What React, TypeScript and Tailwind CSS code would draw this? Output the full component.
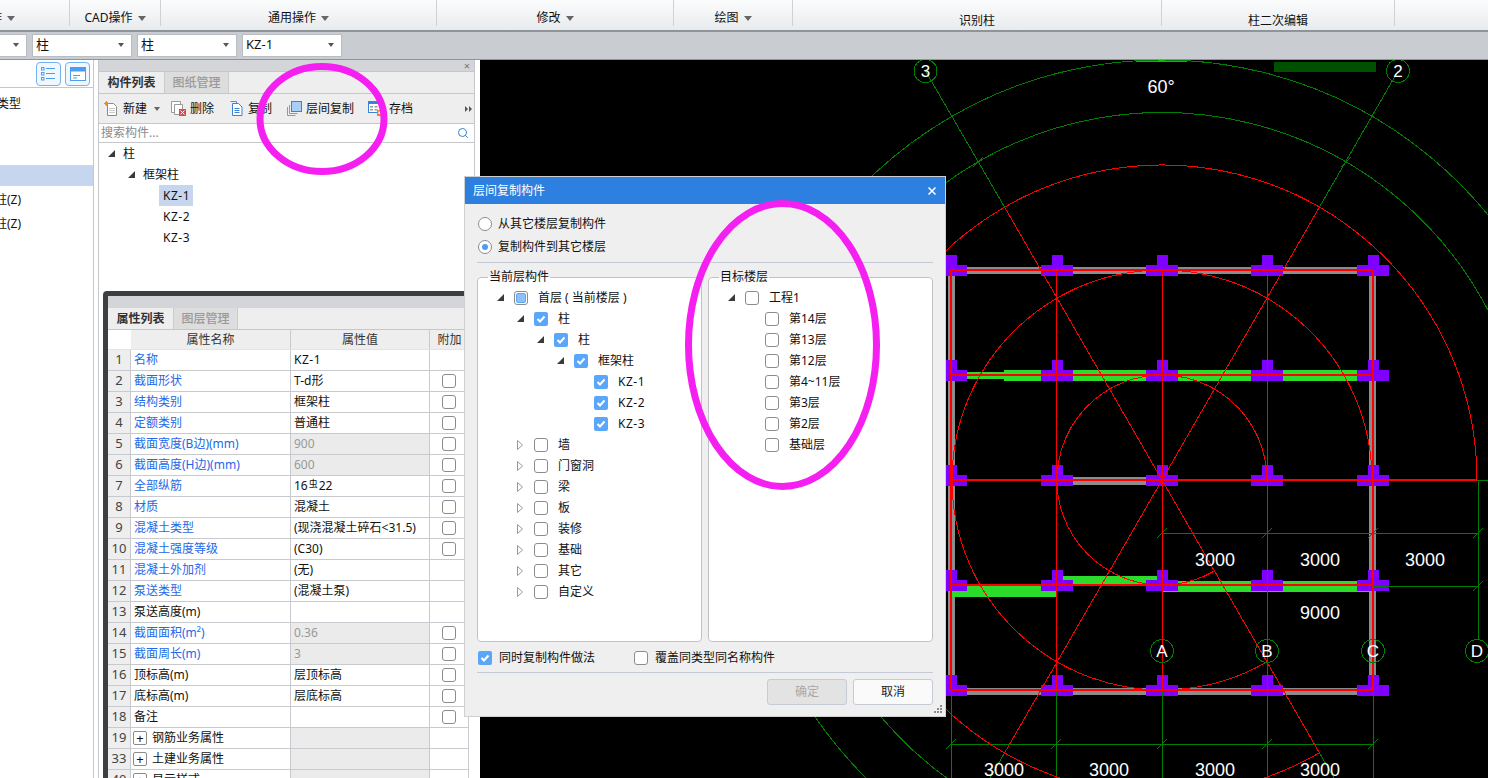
import type { ReactNode } from 'react'
import { Search } from 'lucide-react'

const cx = 1162
const cy = 480

// arc that leaves out the wedge between east and 60 degrees below it
const arcPath = (r: number) => {
  const sx = cx + r * Math.cos(Math.PI / 3)
  const sy = cy + r * Math.sin(Math.PI / 3)
  return `M ${sx} ${sy} A ${r} ${r} 0 1 1 ${cx + r} ${cy}`
}

const ribbonGroups = [
  { width: 'w-[70px]', label: '操作', arrow: true },
  { width: 'w-[91px]', label: 'CAD操作', arrow: true },
  { width: 'w-[276px]', label: '通用操作', arrow: true },
  { width: 'w-[237px]', label: '修改', arrow: true },
  { width: 'w-[119px]', label: '绘图', arrow: true },
  { width: 'w-[369px]', label: '识别柱', arrow: false, low: true },
  { width: 'w-[233px]', label: '柱二次编辑', arrow: false, low: true },
]

type Prop = {
  no: number
  name: string
  value?: ReactNode
  blue?: boolean
  gray?: boolean
  check?: boolean
  group?: boolean
}

const rebarValue = (
  <>
    16<span className="mx-[1px] text-[9px] leading-none -translate-y-[3px]">虫</span>22
  </>
)

const props: Prop[] = [
  { no: 1, name: '名称', value: <span className="tracking-[0.5px]">KZ-1</span>, blue: true },
  { no: 2, name: '截面形状', value: 'T-d形', blue: true, check: true },
  { no: 3, name: '结构类别', value: '框架柱', blue: true, check: true },
  { no: 4, name: '定额类别', value: '普通柱', blue: true, check: true },
  { no: 5, name: '截面宽度(B边)(mm)', value: '900', blue: true, gray: true, check: true },
  { no: 6, name: '截面高度(H边)(mm)', value: '600', blue: true, gray: true, check: true },
  { no: 7, name: '全部纵筋', value: rebarValue, blue: true, check: true },
  { no: 8, name: '材质', value: '混凝土', blue: true, check: true },
  { no: 9, name: '混凝土类型', value: '(现浇混凝土碎石<31.5)', blue: true, check: true },
  { no: 10, name: '混凝土强度等级', value: '(C30)', blue: true, check: true },
  { no: 11, name: '混凝土外加剂', value: '(无)', blue: true },
  { no: 12, name: '泵送类型', value: '(混凝土泵)', blue: true },
  { no: 13, name: '泵送高度(m)' },
  { no: 14, name: '截面面积(m²)', value: '0.36', blue: true, gray: true, check: true },
  { no: 15, name: '截面周长(m)', value: '3', blue: true, gray: true, check: true },
  { no: 16, name: '顶标高(m)', value: '层顶标高', check: true },
  { no: 17, name: '底标高(m)', value: '层底标高', check: true },
  { no: 18, name: '备注', check: true },
  { no: 19, name: '钢筋业务属性', gray: true, group: true },
  { no: 33, name: '土建业务属性', gray: true, group: true },
  { no: 40, name: '显示样式', gray: true, group: true },
]

type TreeItem = {
  depth: number
  label: string
  arrow?: 'open' | 'closed'
  state?: 'on' | 'off' | 'part'
}

const sourceTree: TreeItem[] = [
  { depth: 0, label: '首层 ( 当前楼层 )', arrow: 'open', state: 'part' },
  { depth: 1, label: '柱', arrow: 'open', state: 'on' },
  { depth: 2, label: '柱', arrow: 'open', state: 'on' },
  { depth: 3, label: '框架柱', arrow: 'open', state: 'on' },
  { depth: 4, label: 'KZ-1', state: 'on' },
  { depth: 4, label: 'KZ-2', state: 'on' },
  { depth: 4, label: 'KZ-3', state: 'on' },
  { depth: 1, label: '墙', arrow: 'closed' },
  { depth: 1, label: '门窗洞', arrow: 'closed' },
  { depth: 1, label: '梁', arrow: 'closed' },
  { depth: 1, label: '板', arrow: 'closed' },
  { depth: 1, label: '装修', arrow: 'closed' },
  { depth: 1, label: '基础', arrow: 'closed' },
  { depth: 1, label: '其它', arrow: 'closed' },
  { depth: 1, label: '自定义', arrow: 'closed' },
]

const targetTree: TreeItem[] = [
  { depth: 0, label: '工程1', arrow: 'open' },
  { depth: 1, label: '第14层' },
  { depth: 1, label: '第13层' },
  { depth: 1, label: '第12层' },
  { depth: 1, label: '第4~11层' },
  { depth: 1, label: '第3层' },
  { depth: 1, label: '第2层' },
  { depth: 1, label: '基础层' },
]

const depthPad = ['pl-[18px]', 'pl-[38px]', 'pl-[58px]', 'pl-[78px]', 'pl-[98px]']

const OpenArrow = () => (
  <svg width="7" height="7" viewBox="0 0 7 7">
    <polygon points="0,7 7,7 7,0" fill="#3a3a3a" />
  </svg>
)

const ClosedArrow = () => (
  <svg width="6" height="10" viewBox="0 0 6 10">
    <polygon points="0.5,0.5 5.5,5 0.5,9.5" fill="none" stroke="#999" />
  </svg>
)

const Check = ({ state = 'off' }: { state?: 'on' | 'off' | 'part' }) => {
  if (state === 'on') {
    return (
      <span className="flex items-center justify-center w-[14px] h-[14px] rounded-[2px] bg-[#5aa6f8] shrink-0">
        <svg width="10" height="10" viewBox="0 0 10 10">
          <path d="M1.5 5 L4 7.5 L8.5 2.5" fill="none" stroke="#fff" strokeWidth="2" />
        </svg>
      </span>
    )
  }
  if (state === 'part') {
    return (
      <span className="flex items-center justify-center w-[14px] h-[14px] rounded-[3px] border border-[#8c8c8c] bg-white shrink-0">
        <span className="w-[10px] h-[10px] rounded-[2px] bg-[#8fc0f8] border border-[#5aa6f8]" />
      </span>
    )
  }
  return <span className="block w-[14px] h-[14px] rounded-[3px] border border-[#8c8c8c] bg-white shrink-0" />
}

const Tree = ({ items }: { items: TreeItem[] }) => (
  <div className="pt-[2px]">
    {items.map((item, i) => (
      <div key={i} className={`flex items-center h-[21px] ${depthPad[item.depth]}`}>
        <span className="flex items-center w-[18px] pl-[1px] shrink-0">
          {item.arrow === 'open' && <OpenArrow />}
          {item.arrow === 'closed' && <ClosedArrow />}
        </span>
        <Check state={item.state} />
        <span className={`ml-[10px] whitespace-nowrap ${item.label.startsWith('KZ') ? 'tracking-[0.5px]' : ''}`}>{item.label}</span>
      </div>
    ))}
  </div>
)

const Caret = () => <span className="block ml-[5px] border-x-[4px] border-x-transparent border-t-[5px] border-t-[#666]" />

const Ribbon = () => (
  <div className="flex h-[30px] bg-gradient-to-b from-[#fbfcfc] to-[#e8ebee] overflow-hidden shrink-0">
    {ribbonGroups.map((g, i) => (
      <div
        key={i}
        className={`flex items-center h-[26px] border-r border-[#cfd2d5] shrink-0 ${g.width} ${g.low ? 'pt-[16px]' : 'pt-[10px]'} ${i === 0 ? 'justify-start' : 'justify-center'}`}
      >
        <span className={`whitespace-nowrap ${i === 0 ? '-ml-[22px]' : ''}`}>{g.label}</span>
        {g.arrow && <Caret />}
      </div>
    ))}
  </div>
)

const Select = ({ label, first }: { label: string; first?: boolean }) => (
  <div
    className={`flex items-center justify-between h-[23px] bg-white border border-[#b9bcc0] pl-[3px] pr-[7px] ${first ? 'w-[27px] border-l-0' : 'w-[100px]'}`}
  >
    <span className="text-[13px]">{label}</span>
    <span className="block border-x-[3px] border-x-transparent border-t-[4px] border-t-[#555]" />
  </div>
)

const SelectBar = () => (
  <div className="flex items-center gap-[5px] h-[30px] pb-[1px] bg-[#c9cdd2] border-t-2 border-b border-t-[#8f9499] border-b-[#8f9499] shrink-0">
    <Select label="" first />
    <Select label="柱" />
    <Select label="柱" />
    <Select label="KZ-1" />
  </div>
)

const SideButton = ({ kind }: { kind: 'list' | 'window' }) => (
  <div className="flex items-center justify-center w-[25px] h-[24px] rounded-[4px] border border-[#6fb3f5] bg-[#f1f7fe]">
    {kind === 'list' ? (
      <svg width="15" height="14" viewBox="0 0 15 14" fill="none" stroke="#4c9df0">
        <rect x="0.5" y="0.5" width="2.5" height="2.5" />
        <rect x="0.5" y="5.5" width="2.5" height="2.5" />
        <rect x="0.5" y="10.5" width="2.5" height="2.5" />
        <path d="M5 1.5h9M5 6.5h9M5 11.5h9" />
      </svg>
    ) : (
      <svg width="16" height="14" viewBox="0 0 16 14">
        <rect x="0.5" y="0.5" width="15" height="13" fill="#fff" stroke="#4c9df0" />
        <rect x="0.5" y="0.5" width="15" height="4" fill="#4c9df0" />
        <path d="M3 8.5h7M3 11h4" stroke="#4c9df0" />
      </svg>
    )}
  </div>
)

const SidePanel = () => (
  <div className="w-[94px] shrink-0 border-r border-[#c5c7cb] bg-white overflow-hidden">
    <div className="flex items-center justify-end gap-[4px] h-[28px] pr-[3px] border-b border-[#c5c7cb]">
      <SideButton kind="list" />
      <SideButton kind="window" />
    </div>
    <div className="flex items-center h-[21px] mt-[5px] whitespace-nowrap -ml-[3px]">类型</div>
    <div className="h-[21px] mt-[51px] bg-[#c6d6ee]" />
    <div className="flex items-center h-[21px] mt-[3px] whitespace-nowrap -ml-[5px]">柱(Z)</div>
    <div className="flex items-center h-[21px] mt-[3px] whitespace-nowrap -ml-[5px]">柱(Z)</div>
  </div>
)

const IconNew = () => (
  <svg width="15" height="15" viewBox="0 0 15 15">
    <path d="M3.5 2.5h6l3 3v9h-9z" fill="#fff" stroke="#8a8a8a" />
    <path d="M5 7.5h6M5 9.5h6M5 11.5h6" stroke="#c9c9c9" />
    <path d="M2.5 0v5M0 2.5h5M1 1l3 3M4 1l-3 3" stroke="#f28a1c" />
  </svg>
)

const IconDelete = () => (
  <svg width="15" height="15" viewBox="0 0 15 15">
    <path d="M0.5 0.5h9v11h-9z" fill="#fff" stroke="#9a9a9a" />
    <path d="M3.5 3.5h8v10h-8z" fill="#fff" stroke="#9a9a9a" />
    <rect x="8" y="8" width="7" height="7" fill="#e0474c" />
    <path d="M9.5 9.5l4 4M13.5 9.5l-4 4" stroke="#fff" />
  </svg>
)

const IconCopy = () => (
  <svg width="13" height="15" viewBox="0 0 13 15">
    <path d="M0.5 0.5h6v2" fill="none" stroke="#4a8fdc" />
    <path d="M2.5 2.5h6l3.5 3.5v8.500h-9.500z" fill="#fff" stroke="#3a82d6" />
    <path d="M4.500 7.500h5M4.500 9.500h5M4.500 11.500h5" stroke="#3a82d6" />
  </svg>
)

const IconLayer = () => (
  <svg width="15" height="15" viewBox="0 0 15 15">
    <rect x="4.500" y="0.500" width="10" height="10" fill="#a9cff8" stroke="#3a82d6" />
    <path d="M2.500 4v8.500h8" fill="none" stroke="#f0802a" />
    <path d="M0.500 6v8.500h8" fill="none" stroke="#f0802a" />
  </svg>
)

const IconSave = () => (
  <svg width="17" height="15" viewBox="0 0 17 15">
    <rect x="0.500" y="0.500" width="13" height="11" fill="#fff" stroke="#3a82d6" />
    <rect x="0.500" y="0.500" width="13" height="2.500" fill="#3a82d6" />
    <path d="M2 5h3v1.500h-3zM6.500 5h3v1.500h-3zM2 8h3v1.500h-3zM6.500 8h3v1.500h-3z" fill="#9a9a9a" />
    <rect x="9" y="9" width="6" height="6" fill="#f0802a" />
    <rect x="10.500" y="10.500" width="3" height="2.500" fill="#fff" />
  </svg>
)

const ToolItem = ({ icon, label, className }: { icon: ReactNode; label: string; className: string }) => (
  <div className={`flex items-center gap-[4px] ${className}`}>
    {icon}
    <span className="whitespace-nowrap">{label}</span>
  </div>
)

const PanelTabs = ({ active, other }: { active: string; other: string }) => (
  <div className="flex h-[22px] bg-[#eeeeee] border-b border-[#c5c7cb]">
    <div className="flex items-center justify-center w-[65px] font-bold text-[#333]">{active}</div>
    <div className="flex items-center justify-center w-[65px] bg-[#dddddd] text-[#9a9a9a] font-medium border-x border-[#c9cbce]">{other}</div>
  </div>
)

const ComponentPanel = () => (
  <div className="shrink-0 border-x border-[#c5c7cb] bg-white">
    <div className="flex items-center justify-end h-[12px] pr-[4px] bg-[#d3d5d9] text-[#777] text-[11px] leading-none border-b border-[#c5c7cb]">×</div>
    <PanelTabs active="构件列表" other="图纸管理" />
    <div className="flex items-center h-[30px] bg-[#eeeeee] border-b border-[#c5c7cb] overflow-hidden">
      <ToolItem icon={<IconNew />} label="新建" className="ml-[5px]" />
      <span className="block ml-[7px] border-x-[3px] border-x-transparent border-t-[4px] border-t-[#666]" />
      <ToolItem icon={<IconDelete />} label="删除" className="ml-[11px]" />
      <ToolItem icon={<IconCopy />} label="复制" className="ml-[16px] gap-[5px]" />
      <ToolItem icon={<IconLayer />} label="层间复制" className="ml-[15px]" />
      <ToolItem icon={<IconSave />} label="存档" className="ml-[14px] gap-[3px]" />
      <svg width="7" height="6" viewBox="0 0 7 6" className="ml-auto mr-[2px]" fill="#555">
        <polygon points="0,0 3,3 0,6" />
        <polygon points="4,0 7,3 4,6" />
      </svg>
    </div>
    <div className="flex items-center justify-between h-[19px] pl-[2px] pr-[5px] border-b border-[#c5c7cb] text-[#8a8a8a]">
      <span>搜索构件...</span>
      <Search size={12} strokeWidth={2} className="text-[#2f86d6]" />
    </div>
    <div className="h-[148px]">
      <div className="flex items-center h-[21px] pl-[9px]">
        <OpenArrow />
        <span className="ml-[8px]">柱</span>
      </div>
      <div className="flex items-center h-[21px] pl-[29px]">
        <OpenArrow />
        <span className="ml-[8px]">框架柱</span>
      </div>
      <div className="ml-[60px] flex items-center w-[34px] h-[21px] pl-[4px] tracking-[0.5px] bg-[#c6d6ee]">KZ-1</div>
      <div className="ml-[60px] flex items-center w-[34px] h-[21px] pl-[4px] tracking-[0.5px]">KZ-2</div>
      <div className="ml-[60px] flex items-center w-[34px] h-[21px] pl-[4px] tracking-[0.5px]">KZ-3</div>
    </div>
  </div>
)

const PropRow = ({ row }: { row: Prop }) => (
  <div className="flex h-[21px] border-b border-[#c8cad0] shrink-0">
    <div className="flex items-center justify-center w-[23px] bg-[#eeeeee] border-r border-[#c8cad0] text-[#444] text-[13px] shrink-0">{row.no}</div>
    <div className={`flex items-center w-[160px] border-r border-[#c8cad0] whitespace-nowrap shrink-0 ${row.group ? 'pl-[2px]' : 'pl-[3px]'} ${row.blue ? 'text-[#2468e8]' : ''}`}>
      {row.group && (
        <span className="flex items-center justify-center w-[14px] h-[14px] mr-[5px] rounded-[2px] border border-[#8c8c8c] text-[13px] leading-none">+</span>
      )}
      {row.name}
    </div>
    <div className={`flex items-center w-[139px] pl-[3px] border-r border-[#c8cad0] whitespace-nowrap shrink-0 ${row.gray ? 'bg-[#ebebeb] text-[#999]' : ''}`}>
      {row.value}
    </div>
    <div className="flex items-center justify-center w-[39px] border-r border-[#c8cad0] shrink-0">
      {row.check && <Check />}
    </div>
  </div>
)

const PropertyPanel = () => (
  <div className="ml-[4px] mr-[7px] pl-[5px] pt-[5px] bg-[#3c4043] rounded-tl-[4px] flex-1 overflow-hidden">
    <div className="h-full bg-white">
      <div className="h-[12px] bg-[#d3d5d9]" />
      <PanelTabs active="属性列表" other="图层管理" />
      <div className="w-[361px]">
        <div className="flex h-[20px] text-[#333] border-b border-[#e4e4e4]">
          <div className="w-[23px] bg-white shrink-0" />
          <div className="flex items-center justify-center w-[160px] bg-[#eeeeee] border-r border-[#c8cad0] shrink-0">属性名称</div>
          <div className="flex items-center justify-center w-[139px] bg-[#eeeeee] border-r border-[#c8cad0] shrink-0">属性值</div>
          <div className="flex items-center justify-center w-[39px] bg-[#eeeeee] shrink-0">附加</div>
        </div>
        {props.map(row => <PropRow key={row.no} row={row} />)}
      </div>
    </div>
  </div>
)

const Column = ({ x, y }: { x: number; y: number }) => (
  <path d={`M${x - 16} ${y - 5}h11v-10h11v10h10v11h-32z`} fill="#8000ff" />
)

const Dim = ({ x, y, text }: { x: number; y: number; text: string }) => (
  <text x={x} y={y} textAnchor="middle" fill="#fff" fontSize="18" fontFamily="Liberation Sans, sans-serif">{text}</text>
)

const Tick = ({ x, y }: { x: number; y: number }) => (
  <path d={`M${x - 5} ${y + 5}L${x + 5} ${y - 5}`} stroke="#008000" />
)

const Bubble = ({ x, y, label }: { x: number; y: number; label: string }) => (
  <g>
    <circle cx={x} cy={y} r="11.500" fill="none" stroke="#008000" />
    <text x={x} y={y + 6} textAnchor="middle" fill="#fff" fontSize="17" fontFamily="Liberation Sans, sans-serif">{label}</text>
  </g>
)

const xs = [951, 1056, 1162, 1267, 1373]
const ys = [270, 375, 480, 585, 690]
const columnXs = [951, 1057, 1162, 1267, 1373]

const Canvas = () => (
  <div className="flex-1 bg-black overflow-hidden">
    <svg width="1008" height="718" viewBox="480 60 1008 718" className="block" shapeRendering="crispEdges">
      <rect x="1136" y="60" width="51" height="1.500" fill="#00c000" />
      <rect x="1274" y="62" width="102" height="10" fill="#005000" />

      {/* grey walls */}
      <rect x="948" y="267" width="428" height="7" fill="#8c8c8c" />
      <rect x="948" y="688" width="428" height="7" fill="#8c8c8c" />
      <rect x="948" y="267" width="7" height="428" fill="#8c8c8c" />
      <rect x="1369" y="267" width="7" height="428" fill="#8c8c8c" />
      <rect x="1056" y="477" width="106" height="8" fill="#8c8c8c" />

      {/* green beams */}
      <rect x="951" y="372" width="53" height="7" fill="#2bdc2b" />
      <rect x="1004" y="370" width="369" height="11" fill="#2bdc2b" />
      <rect x="951" y="586" width="105" height="11" fill="#2bdc2b" />
      <rect x="1056" y="576" width="106" height="10" fill="#2bdc2b" />
      <rect x="1162" y="581" width="211" height="11" fill="#2bdc2b" />

      {ys.map(y => columnXs.map(x => <Column key={`${x}-${y}`} x={x} y={y} />))}

      {/* axis and dimension lines */}
      <g stroke="#008000" fill="none">
        <path d={arcPath(367.5)} />
        <path d={arcPath(420)} />
        <path d="M951 690V778M1056 690V778M1162 690V778M1267 690V778M1373 690V778" />
        <path d="M951 744H1373M1162 533H1478M1373 586H1478M1373 480H1488M1478 480V640" />
        <path d="M1004.500 207L925.500 71M1319.500 207L1398 71M1004.500 753L990 778M1319.500 753L1334 778" />
      </g>
      {[1162, 1267, 1373, 1478].map(x => <Tick key={x} x={x} y={533} />)}
      {[951, 1056, 1162, 1267, 1373].map(x => <Tick key={x} x={x} y={744} />)}
      <Tick x={1478} y={586} />
      <Tick x={978} y={162} />
      <Tick x={1346} y={162} />

      {/* red axes */}
      <g stroke="#ff0000" fill="none">
        <path d={arcPath(105)} />
        <path d={arcPath(210)} />
        <path d={arcPath(315)} />
        <path d={`M${cx} ${cy}L1004.500 207M${cx} ${cy}L1319.500 207M${cx} ${cy}L1004.500 753M${cx} ${cy}L1319.500 753`} />
        <path d="M1056 270V690M1162 270V690M1267 270V690" />
      </g>
      <g stroke="#ff0000" strokeWidth="2" fill="none">
        {ys.map(y => <path key={y} d={`M${xs[0]} ${y}H${y === 480 ? 1477 : xs[4]}`} />)}
        <path d="M951 270V690M1373 270V690" />
      </g>

      <Bubble x={925.5} y={71} label="3" />
      <Bubble x={1398} y={71} label="2" />
      <Bubble x={1162} y={651} label="A" />
      <Bubble x={1267} y={651} label="B" />
      <Bubble x={1373} y={651} label="C" />
      <Bubble x={1477} y={651} label="D" />

      <Dim x={1161} y={93} text="60°" />
      <Dim x={1215} y={566} text="3000" />
      <Dim x={1320} y={566} text="3000" />
      <Dim x={1425} y={566} text="3000" />
      <Dim x={1320} y={619} text="9000" />
      <Dim x={1004} y={776} text="3000" />
      <Dim x={1109} y={776} text="3000" />
      <Dim x={1215} y={776} text="3000" />
      <Dim x={1320} y={776} text="3000" />
    </svg>
  </div>
)

const Radio = ({ on, label }: { on?: boolean; label: string }) => (
  <div className="flex items-center h-[23px] pl-[1px]">
    <span className="flex items-center justify-center w-[14px] h-[14px] rounded-full border border-[#8c8c8c] bg-white shrink-0">
      {on && <span className="w-[6px] h-[6px] rounded-full bg-[#4a9cf6]" />}
    </span>
    <span className="ml-[6px]">{label}</span>
  </div>
)

const GroupBox = ({ title, items, className }: { title: string; items: TreeItem[]; className: string }) => (
  <fieldset className={`h-[373px] bg-white border border-[#c0c2c6] rounded-[4px] ${className}`}>
    <legend className="ml-[10px] px-[1px] text-[12px] leading-[16px]">{title}</legend>
    <Tree items={items} />
  </fieldset>
)

const CopyDialog = () => (
  <div className="absolute left-[465px] top-[177px] w-[480px] h-[539px] bg-[#efefef] shadow-[0_0_0_1px_#d0d0d0]">
    <div className="flex items-center justify-between h-[27px] px-[8px] bg-[#2d7fe0] text-white">
      <span>层间复制构件</span>
      <svg width="10" height="10" viewBox="0 0 10 10">
        <path d="M1.500 1.500l7 7M8.500 1.500l-7 7" stroke="#fff" strokeWidth="1.500" />
      </svg>
    </div>
    <div className="px-[12px] pt-[8px]">
      <Radio label="从其它楼层复制构件" />
      <Radio on label="复制构件到其它楼层" />
      <div className="h-px mt-[4px] bg-[#c3c9d6]" />
      <div className="flex gap-[6px] mt-[6px]">
        <GroupBox title="当前层构件" items={sourceTree} className="w-[225px]" />
        <GroupBox title="目标楼层" items={targetTree} className="w-[225px]" />
      </div>
      <div className="flex items-center h-[21px] mt-[5px] pl-[1px]">
        <Check state="on" />
        <span className="ml-[7px] whitespace-nowrap">同时复制构件做法</span>
        <span className="ml-[39px]"><Check /></span>
        <span className="ml-[7px] whitespace-nowrap">覆盖同类型同名称构件</span>
      </div>
      <div className="h-px mt-[4px] bg-[#c3c9d6]" />
      <div className="flex justify-end gap-[6px] mt-[6px]">
        <button className="w-[80px] h-[26px] rounded-[3px] bg-[#e3e3e3] border border-[#c5cbd6] text-[#a8a8a8]">确定</button>
        <button className="w-[80px] h-[26px] rounded-[3px] bg-[#fafafa] border border-[#c5cbd6] text-[#222]">取消</button>
      </div>
    </div>
    <svg width="9" height="9" viewBox="0 0 9 9" className="absolute right-[2px] bottom-[2px]" fill="#8a8a8a">
      <rect x="6" y="0" width="2" height="2" />
      <rect x="3" y="3" width="2" height="2" />
      <rect x="6" y="3" width="2" height="2" />
      <rect x="0" y="6" width="2" height="2" />
      <rect x="3" y="6" width="2" height="2" />
      <rect x="6" y="6" width="2" height="2" />
    </svg>
  </div>
)

const Annotations = () => (
  <svg width="1488" height="778" className="absolute inset-0 pointer-events-none" fill="none" stroke="#f41ff0" strokeWidth="7">
    <ellipse cx="322" cy="119" rx="62" ry="52.500" />
    <ellipse cx="782.500" cy="345" rx="94" ry="141.500" />
  </svg>
)

export default function App() {
  return (
    <div className="relative flex flex-col w-[1488px] h-[778px] overflow-hidden bg-white text-[12px] text-[#111] font-['Noto_Sans','Noto_Sans_CJK_SC',sans-serif]">
      <Ribbon />
      <SelectBar />
      <div className="flex flex-1 min-h-0">
        <SidePanel />
        <div className="flex flex-col w-[386px] shrink-0 pl-[4px] pr-[5px]">
          <ComponentPanel />
          <div className="flex flex-col flex-1 min-h-0 mr-[-5px] border-l border-[#c5c7cb]">
            <PropertyPanel />
          </div>
        </div>
        <Canvas />
      </div>
      <CopyDialog />
      <Annotations />
    </div>
  )
}
